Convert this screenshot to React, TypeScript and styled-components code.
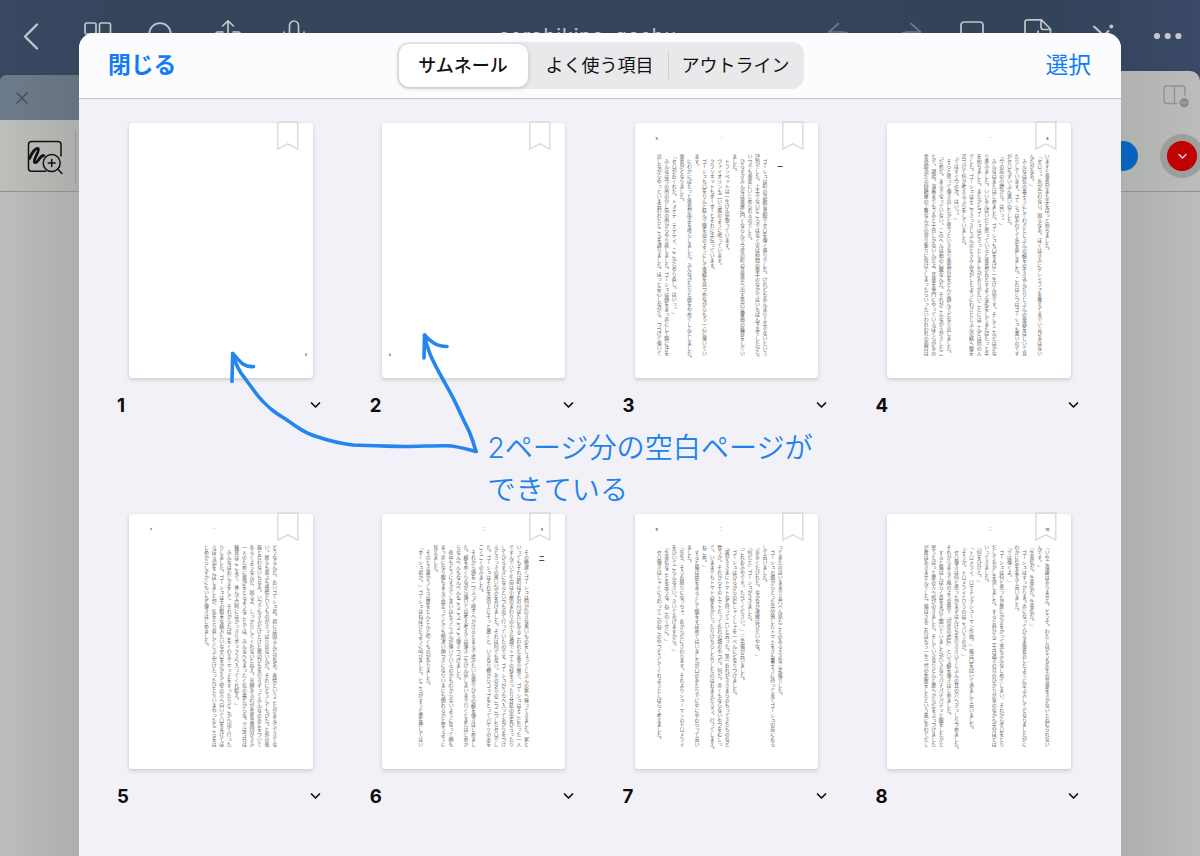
import React from "react";
import styled, { createGlobalStyle } from "styled-components";

const Global = createGlobalStyle`
  *, *::before, *::after { box-sizing: border-box; }
  html, body { margin: 0; padding: 0; }
  body { width: 1200px; height: 856px; overflow: hidden; font-family: Inter, "Noto Sans CJK JP", sans-serif; }
  svg { display: block; overflow: visible; }
`;

const Screen = styled.div`
  position: relative;
  width: 1200px;
  height: 856px;
  overflow: hidden;
  display: flex;
  flex-direction: column;
  background: #b9bbba;
`;

const NavBar = styled.header`
  height: 70px;
  flex: none;
  display: flex;
  align-items: flex-start;
  justify-content: space-between;
  padding: 15px 19px 0 20px;
  background: linear-gradient(90deg, #384863 0, #35455c 120px, #33435a 1060px, #3a4966 100%);
`;

const NavGroup = styled.div<{ $gap: number }>`
  display: flex;
  align-items: center;
  height: 41px;
  gap: ${(p) => p.$gap}px;
`;

const DocTitle = styled.div`
  font-size: 19.5px;
  line-height: 24px;
  letter-spacing: 1.05px;
  color: #c3c6c4;
  padding: 9px 0 0 43px;
`;

const TabStrip = styled.div`
  height: 50px;
  flex: none;
  display: flex;
  justify-content: space-between;
  align-items: flex-end;
  background: linear-gradient(90deg, #384863 0, #35455c 80px, #33435a 1060px, #3a4966 100%);
`;

const ActiveTab = styled.div`
  width: 600px;
  height: 45px;
  border-top-left-radius: 6px;
  padding: 17px 0 0 16px;
  background: linear-gradient(90deg, #6e7b8c 0, #66727e 80px);
`;

const TabActions = styled.div`
  width: 600px;
  height: 49px;
  border-top-right-radius: 10px;
  display: flex;
  justify-content: flex-end;
  padding: 13.5px 10px 0 0;
  background: linear-gradient(270deg, #bcbdbb 0, #b0b2af 80px);
`;

const ToolBar = styled.div`
  height: 72px;
  flex: none;
  display: flex;
  justify-content: space-between;
  border-bottom: 1px solid #8f9190;
  background: linear-gradient(90deg, #bdbfbb 0, #acaeab 79px, #b0b2af 1121px, #bcbdbb 100%);
`;

const ToolLeft = styled.div`
  display: flex;
  align-items: flex-start;
  padding: 10px 0 0 27px;
  gap: 11px;
`;

const ToolDivider = styled.span`
  width: 1px;
  height: 54px;
  background: #939593;
`;

const Swatches = styled.div`
  display: flex;
  align-items: center;
  gap: 22px;
  margin-right: -4px;
`;

const Swatch = styled.span<{ $color: string; $ring?: boolean }>`
  width: ${(p) => (p.$ring ? 44 : 30)}px;
  height: ${(p) => (p.$ring ? 44 : 30)}px;
  border-radius: 50%;
  background: ${(p) => (p.$ring ? `radial-gradient(circle, ${p.$color} 14.6px, #9c9f9e 15.4px)` : p.$color)};
  display: flex;
  align-items: center;
  justify-content: center;
`;

const Canvas = styled.div`
  flex: 1;
  background: linear-gradient(90deg, #bcbdbc 0, #adaeae 79px, #adaeae 1121px, #bbbcbb 100%);
`;

const Sheet = styled.section`
  position: absolute;
  left: 79px;
  top: 33px;
  width: 1042px;
  height: 840px;
  border-radius: 15px 15px 0 0;
  overflow: hidden;
  background: #f2f1f7;
  display: flex;
  flex-direction: column;
`;

const SheetHeader = styled.div`
  height: 65.5px;
  flex: none;
  display: grid;
  grid-template-columns: 1fr auto 1fr;
  align-items: start;
  padding: 9px 30px 0 30px;
  background: #fcfcfe;
  border-bottom: 1px solid #c4c4c8;
`;

const HeaderButton = styled.button<{ $strong?: boolean; $end?: boolean }>`
  all: unset;
  justify-self: ${(p) => (p.$end ? "end" : "start")};
  margin-left: ${(p) => (p.$end ? 0 : -1)}px;
  font-size: 22.8px;
  line-height: 46px;
  font-weight: ${(p) => (p.$strong ? 700 : 400)};
  color: #107df2;
`;

const Segments = styled.div`
  display: flex;
  width: 407px;
  height: 47px;
  padding: 2px;
  border-radius: 12px;
  background: #e9e9ec;
`;

const Segment = styled.button<{ $active?: boolean; $width: number; $shift?: number }>`
  all: unset;
  box-sizing: border-box;
  width: ${(p) => p.$width}px;
  height: 43px;
  padding-left: ${(p) => p.$shift ?? 0}px;
  line-height: 42px;
  text-align: center;
  border-radius: 10px;
  font-size: 18px;
  color: #111;
  font-weight: ${(p) => (p.$active ? 500 : 400)};
  background: ${(p) => (p.$active ? "#fff" : "transparent")};
  box-shadow: ${(p) => (p.$active ? "0 1px 5px rgba(0,0,0,.18)" : "none")};
`;

const SegmentRule = styled.span`
  width: 1px;
  height: 27px;
  margin-top: 8px;
  background: #cfcfd2;
`;

const Grid = styled.div`
  display: grid;
  grid-template-columns: repeat(4, 207px);
  column-gap: 45.8px;
  grid-auto-rows: 391px;
  padding: 24.5px 0 0 38px;
`;

const Cell = styled.article`
  display: flex;
  flex-direction: column;
`;

const Paper = styled.div`
  position: relative;
  width: 183.5px;
  height: 255px;
  margin-left: 12px;
  border-radius: 3px;
  background: #fff;
  box-shadow: 0 2px 4px rgba(0, 0, 0, 0.14), 0 0 2px rgba(0, 0, 0, 0.08);
`;

const Ribbon = styled.svg`
  position: absolute;
  left: 147.6px;
  top: -2px;
`;

const PrintedPage = styled.div<{ $odd: boolean }>`
  position: relative;
  height: 100%;
  padding-top: 31px;
  padding-right: ${(p) => (p.$odd ? 34.4 : 20.2)}px;
`;

const Columns = styled.div`
  display: flex;
  flex-direction: row-reverse;
  justify-content: flex-start;
`;

const Column = styled.p<{ $heading?: boolean }>`
  flex: none;
  margin: 0;
  padding-top: ${(p) => (p.$heading ? 10 : 0)}px;
  width: 7.57px;
  height: 212px;
  writing-mode: vertical-rl;
  text-spacing-trim: space-all;
  white-space: pre;
  font-family: "Noto Sans CJK JP", sans-serif;
  font-size: ${(p) => (p.$heading ? 5.8 : 4.93)}px;
  line-height: 7.57px;
  font-weight: ${(p) => (p.$heading ? 700 : 400)};
  color: ${(p) => (p.$heading ? "#222" : "#5c5c5c")};
`;

const PageMark = styled.span<{ $x: number; $y?: number; $faint?: boolean }>`
  position: absolute;
  left: ${(p) => p.$x}px;
  top: ${(p) => p.$y ?? 12}px;
  width: 10px;
  text-align: center;
  font-size: ${(p) => (p.$faint ? 4 : 3.6)}px;
  line-height: 8px;
  font-weight: ${(p) => (p.$faint ? 300 : 600)};
  color: ${(p) => (p.$faint ? "#999" : "#555")};
`;

const Caption = styled.div`
  display: flex;
  justify-content: space-between;
  align-items: center;
  height: 24px;
  margin-top: 14.5px;
  padding-right: 3px;
  font-size: 18.6px;
  font-weight: 700;
  color: #0b0b0d;
`;

const Annotation = styled.div`
  position: absolute;
  left: 487.5px;
  top: 427px;
  font-size: 28.1px;
  line-height: 42px;
  font-weight: 350;
  color: #2083ec;
  white-space: nowrap;
`;

const ArrowInk = styled.svg`
  position: absolute;
  left: 0;
  top: 0;
  pointer-events: none;
`;

type PageData = { no: number; folio: string; chapter?: string; heading?: string; lines: string[] };

const pages: PageData[] = [
  { no: 1, folio: "3", lines: [] },
  { no: 2, folio: "4", lines: [] },
  {
    no: 3,
    folio: "5",
    chapter: "一",
    heading: "一",
    lines: [
      "　ゴーシュは町の活動写真館でセロを弾く係りでした。けれどもあんまり上手でないという",
      "評判でした。上手でないどころではなく実は仲間の楽手のなかではいちばん下手でしたから、",
      "いつでも楽長にいじめられるのでした。",
      "　ひるすぎみんなは楽屋に円くならんで今度の町の音楽会へ出す第六交響曲の練習をしてい",
      "ました。",
      "　トランペットは一生けん命歌っています。",
      "　ヴァイオリンも二いろ風のように鳴っています。",
      "　クラリネットもボーボーとそれに手伝っています。",
      "　ゴーシュも口をりんと結んで眼を皿のようにして楽譜を見つめながらもう一心に弾いてい",
      "ます。",
      "　にわかにぱたっと楽長が両手を鳴らしました。みんなぴたりと曲をやめてしんとしました。",
      "楽長がどなりました。",
      "「セロがおくれた。トォテテ　テテテイ、ここからやり直し。はいっ。」",
      "　みんなは今の所の少し前の所からやり直しました。ゴーシュは顔をまっ赤にして額に汗を",
      "出しながらやっといま云われたところを通りました。ほっと安心しながら、つづけて弾いて",
    ],
  },
  {
    no: 4,
    folio: "6",
    chapter: "一",
    lines: [
      "いますと楽長がまた手をぱっと拍ちました。",
      "「セロっ。糸が合わない。困るなあ。ぼくはきみにドレミファを教えてまでいるひまはない",
      "んだがなあ。」",
      "　みんなは気の毒そうにしてわざとじぶんの譜をのぞき込んだりじぶんの楽器をはじいて見",
      "たりしています。ゴーシュはあわてて糸を直しました。これはじつはゴーシュも悪いのです",
      "がセロもずいぶん悪いのでした。",
      "「今の前の小節から。はいっ。」",
      "　みんなはまたはじめました。ゴーシュも口をまげて一生けん命です。そしてこんどはかな",
      "り進みました。いいあんばいだと思っていると楽長がおどすような形をしてまたぱたっと手",
      "を拍ちました。またかとゴーシュはどきっとしましたがありがたいことにはこんどは別の人",
      "でした。ゴーシュはそこでさっきじぶんのときみんながしたようにわざとじぶんの譜へ眼を",
      "近づけて何か考えるふりをしていました。",
      "「ではすぐ今の次。はいっ。」",
      "　そらと思って弾き出したかと思うといきなり楽長が足をどんと踏んでどなり出しました。",
      "「だめだ。まるでなっていない。このへんは曲の心臓なんだ。それがこんながさがさしたこ",
      "とで。諸君。演奏までもうあと十日しかないんだよ。音楽を専門にやっているぼくらがあの",
      "金沓鍛冶だの砂糖屋の丁稚なんかの寄り集りに負けてしまったらいったいわれわれの面目は",
    ],
  },
  {
    no: 5,
    folio: "7",
    chapter: "一",
    lines: [
      "どうなるんだ。おいゴーシュ君。君には困るんだがなあ。表情ということがまるでできてな",
      "い。怒るも喜ぶも感情というものがさっぱり出ないんだ。それにどうしてもぴたっと外の楽",
      "器と合わないもなあ。いつでもきみだけとけた靴のひもを引きずってみんなのあとをついて",
      "あるくようなんだ、困るよ、しっかりしてくれないとねえ。光輝あるわが金星音楽団がきみ",
      "一人のために悪評をとるようなことでは、みんなへもまったく気の毒だからな。では今日は",
      "練習はここまで、休んで六時にはかっきりボックスへ入ってくれ給え。」",
      "　みんなはおじぎをして、それからたばこをくわえてマッチをすったりどこかへ出て行った",
      "りしました。ゴーシュはその粗末な箱みたいなセロをかかえて壁の方へ向いて口をまげてぼ",
      "ろぼろ泪をこぼしましたが、気をとり直してじぶんだけたったひとりいまやったところをは",
      "じめからしずかにもいちど弾きはじめました。",
    ],
  },
  {
    no: 6,
    folio: "8",
    chapter: "二",
    heading: "二",
    lines: [
      "　その晩遅くゴーシュは何か巨きな黒いものをしょってじぶんの家へ帰ってきました。家と",
      "いってもそれは町はずれの川ばたにあるこわれた水車小屋で、ゴーシュはそこにたった一人",
      "ですんでいて午前は小屋のまわりの小さな畑でトマトの枝をきったり甘藍の虫をひろったり",
      "してひるすぎになるといつも出て行っていたのです。ゴーシュがうちへ入ってあかりをつけ",
      "るとさっきの黒い包みをあけました。それは何でもない。あの夕方のごつごつしたセロでし",
      "た。ゴーシュはそれを床の上にそっと置くと、いきなり棚からコップをとってバケツの水を",
      "ごくごくのみました。",
      "　それから頭を一つふって椅子へかけるとまるで虎みたいな勢でひるの譜を弾きはじめまし",
      "た。譜をめくりながら弾いては考え考えては弾き一生けん命しまいまで行くとまたはじめか",
      "らなんべんもなんべんもごうごうごうごう弾きつづけました。",
      "　夜中もとうにすぎてしまいはもうじぶんが弾いているのかもわからないようになって顔も",
      "まっ赤になり眼もまるで血走ってとても物凄い顔つきになりいまにも倒れるかと思うように",
      "見えました。",
      "　そのとき誰かうしろの扉をとんとんと叩くものがありました。",
      "「ホーシュ君か。」ゴーシュはねぼけたように叫びました。ところがすうと扉を押してはい",
    ],
  },
  {
    no: 7,
    folio: "9",
    chapter: "二",
    lines: [
      "って来たのはいままで五六ぺん見たことのある大きな三毛猫でした。",
      "　ゴーシュの畑からとった半分熟したトマトをさも重そうに持って来てゴーシュの前におろ",
      "して云いました。",
      "「ああくたびれた。なかなか運搬はひどいやな。」",
      "「何だと」ゴーシュがききました。",
      "「これおみやです。たべてください。」三毛猫が云いました。",
      "　ゴーシュはひるからのむしゃくしゃを一ぺんにどなりつけました。",
      "「誰がきさまにトマトなど持ってこいと云った。第一おれがきさまらのもってきたものなど",
      "食うか。それからそのトマトだっておれの畑のやつだ。何だ。赤くもならないやつをむしっ",
      "て。いままでもトマトの茎をかじったりけちらしたりしたのはおまえだろう。行ってしまえ。",
      "ねこめ。」",
      "　すると猫は肩をまるくして眼をすぼめてはいましたが口のあたりでにやにやわらって云い",
      "ました。",
      "「先生、そうお怒りになっちゃ、おからだにさわります。それよりシューマンのトロメライ",
      "をひいてごらんなさい。きいてあげますから。」",
      "「生意気なことを云うな。ねこのくせに。」",
      "　セロ弾きはしゃくにさわってこのねこのやつどうしてくれようとしばらく考えました。",
    ],
  },
  {
    no: 8,
    folio: "10",
    chapter: "二",
    lines: [
      "「いやご遠慮はありません。どうぞ。わたしはどうも先生の音楽をきかないとねむられない",
      "んです。」",
      "「生意気だ。生意気だ。生意気だ。」",
      "　ゴーシュはすっかりまっ赤になってひるま楽長のしたように足ぶみしてどなりましたがに",
      "わかに気を変えて云いました。",
      "「では弾くよ。」",
      "　ゴーシュは何と思ったか扉にかぎをかって窓もみんなしめてしまい、それからセロをとり",
      "だしてあかしを消しました。すると外から二十日過ぎの月のひかりが室のなかへ半分ほどは",
      "いってきました。",
      "「何をひけと。」",
      "「トロメライ、ロマチックシューマン作曲。」猫は口を拭いて済まして云いました。",
      "「そうか。トロメライというのはこういうのか。」",
      "　セロ弾きは何と思ったかまずはんけちを引きさいてじぶんの耳の穴へぎっしりつめました。",
      "それからまるで嵐のような勢で「印度の虎狩」という譜を弾きはじめました。",
      "　すると猫はしばらく首をまげて聞いていましたがいきなりパチパチパチッと眼をしたかと",
      "思うとぱっと扉の方へ飛びのきました。そしていきなりどんと扉へからだをぶっつけました",
      "が扉はあきませんでした。猫はさあこれはもう一生一代の失敗をしたという風にあわてだし",
    ],
  },
];

type IconProps = { w: number; h: number; sw?: number; color?: string; children: React.ReactNode };
const Icon = ({ w, h, sw = 1.7, color = "#c3c6c4", children }: IconProps) => (
  <svg width={w} height={h} viewBox={`0 0 ${w} ${h}`} fill="none" stroke={color} strokeWidth={sw} strokeLinecap="round" strokeLinejoin="round">
    {children}
  </svg>
);

const Chevron = () => (
  <Icon w={11} h={8} sw={1.7} color="#111">
    <path d="M1.500 2 5.500 6 9.500 2" />
  </Icon>
);

function Thumbnail({ page }: { page: PageData }) {
  const odd = page.no % 2 === 1;
  const blank = page.lines.length === 0;
  return (
    <Cell>
      <Paper>
        <Ribbon width="22" height="30" viewBox="0 0 22 30" fill="none" stroke="#dadadc" strokeWidth="1.4">
          <path d="M.8 1H20.800V28L10.800 22.800.8 28Z" />
        </Ribbon>
        {blank ? (
          <PageMark $x={odd ? 172 : 3} $y={228}>{page.folio}</PageMark>
        ) : (
          <PrintedPage $odd={odd}>
            <PageMark $x={odd ? 17 : 155}>{page.folio}</PageMark>
            <PageMark $x={odd ? 81 : 98} $faint>{page.chapter}</PageMark>
            <Columns>
              {page.heading && <Column $heading>{page.heading}</Column>}
              {page.heading && <Column />}
              {page.lines.map((line, i) => (
                <Column key={i}>{line}</Column>
              ))}
            </Columns>
          </PrintedPage>
        )}
      </Paper>
      <Caption>
        {page.no}
        <Chevron />
      </Caption>
    </Cell>
  );
}

export default function App() {
  return (
    <Screen>
      <Global />
      <NavBar>
        <NavGroup $gap={42}>
          <Icon w={22} h={26} sw={2.4}><path d="M17 1.500 5 13.500 17 25.500" /></Icon>
          <Icon w={23} h={28}>
            <rect x="1" y="1" width="11" height="11" rx="1.5" /><rect x="15.5" y="1" width="11" height="11" rx="1.5" />
            <rect x="1" y="15.5" width="11" height="11" rx="1.5" /><rect x="15.5" y="15.5" width="11" height="11" rx="1.5" />
          </Icon>
          <Icon w={24} h={28}><circle cx="11" cy="12" r="10.8" /><path d="m19 20 7 7" /></Icon>
          <Icon w={26} h={31}><path d="M13 20V1M7.500 6 13 .8 18.500 6M8 12H2.500Q1 12 1 14V28H25V14Q25 12 23.500 12H18" /></Icon>
          <Icon w={22} h={31}><rect x="6.5" y="1" width="9" height="20" rx="4.5" /><path d="M1 12V16Q1 25 11 25T21 16V12" /></Icon>
        </NavGroup>
        <DocTitle>serohikino_goshu</DocTitle>
        <NavGroup $gap={40}>
          <Icon w={28} h={26} color="#6d7985"><path d="M10.500 .5 1 9 10.500 17.500M1 9H14Q24 9 24 19" /></Icon>
          <Icon w={24} h={26} color="#6d7985"><path d="M15 .5 24.500 9 15 17.500M24.500 9H12Q2 9 2 19" /></Icon>
          <Icon w={24} h={28}><rect x="1" y="0" width="22" height="24" rx="3" /></Icon>
          <Icon w={28} h={33}><path d="M26.500 29V10L17.500 .8H3.500Q1 .8 1 3V29M17 1V8Q17 10.500 19.500 10.500H26.500M14 12V22M9.500 17.500H18.500" /></Icon>
          <Icon w={21} h={26} sw={2}><path d="M2 3.500 22 22M16.500 8 8 16" /><circle cx="19.300" cy="3.500" r="1" /></Icon>
          <svg width="28" height="8" viewBox="0 0 28 8" fill="#c3c6c4"><circle cx="4" cy="4" r="3.1" /><circle cx="14.700" cy="4" r="3.1" /><circle cx="25.400" cy="4" r="3.1" /></svg>
        </NavGroup>
      </NavBar>
      <TabStrip>
        <ActiveTab><Icon w={12} h={12} sw={1.3} color="#3e4b5b"><path d="M1 1 11 11M11 1 1 11" /></Icon></ActiveTab>
        <TabActions>
          <Icon w={27} h={24} sw={1.4} color="#909392">
            <path d="M14 18.500H4Q1 18.500 1 15.500V4Q1 1 4 1H19Q22 1 22 4V10M11.500 1V18.500" />
            <circle cx="21.200" cy="17.700" r="4.700" fill="#8a8d8c" stroke="none" />
            <path d="M19 17.700h.01M21.200 17.700h.01M23.400 17.700h.01" stroke="#b5b7b5" />
          </Icon>
        </TabActions>
      </TabStrip>
      <ToolBar>
        <ToolLeft>
          <Icon w={37} h={46} sw={1.5} color="#111">
            <path d="M19 41.200H4.500Q1.500 41.200 1.500 38.200V14.500Q1.500 11.500 4.500 11.500H31Q34 11.500 34 14.500V26" />
            <path d="M2.500 28.500C5 22 9 17.500 11 18.500C13.500 20.500 5 30.500 7.800 32.500C10.500 34 12.500 26 16.500 25.500" strokeWidth="2.900" />
            <circle cx="24.700" cy="33" r="8.500" /><path d="M21.200 33H28.200M24.700 29.500V36.500M30.800 39.300 35 43.500" />
          </Icon>
          <ToolDivider />
        </ToolLeft>
        <Swatches>
          <Swatch $color="#0862c0" />
          <Swatch $color="#bf0202" $ring>
            <Icon w={9} h={6} sw={1.5} color="#e6d6d3"><path d="M1 1.500 4.500 5 8 1.500" /></Icon>
          </Swatch>
        </Swatches>
      </ToolBar>
      <Canvas />
      <Sheet>
        <SheetHeader>
          <HeaderButton $strong>閉じる</HeaderButton>
          <Segments>
            <Segment $active $width={129}>サムネール</Segment>
            <Segment $width={140} $shift={4}>よく使う項目</Segment>
            <SegmentRule />
            <Segment $width={133} $shift={1}>アウトライン</Segment>
          </Segments>
          <HeaderButton $end>選択</HeaderButton>
        </SheetHeader>
        <Grid>
          {pages.map((page) => (
            <Thumbnail key={page.no} page={page} />
          ))}
        </Grid>
      </Sheet>
      <ArrowInk width="1200" height="856" viewBox="0 0 1200 856" fill="none" stroke="#2585ee" strokeWidth="3.600" strokeLinecap="round" strokeLinejoin="round">
        <path d="M232 381.500 232.700 353.500C239 360 243 367.500 253.500 366.500" />
        <path d="M232.700 353.500C235 362 237 367 241 373C246 380 250 385 255 392C260 399 265 404 271.500 409.500C279 415.500 286 419 294 425C303 431.500 309 434.500 318 437C330 441 340 443.500 353 445C370 446 388 446 404 446.500C420 446.500 433 445.500 447 445.700C458 446 466 449 476 451.500" />
        <path d="M424 358 424.500 335C430 341 436 346.500 447 346.500" />
        <path d="M424.500 335C426 343 428 349 430 354C434 364 440 374 445.500 384C450 392 454 399 457.500 407C462 417 465 423 469 431C472 438 474 444 476 451.500" />
      </ArrowInk>
      <Annotation>
        2ページ分の空白ページが
        <br />
        できている
      </Annotation>
    </Screen>
  );
}
